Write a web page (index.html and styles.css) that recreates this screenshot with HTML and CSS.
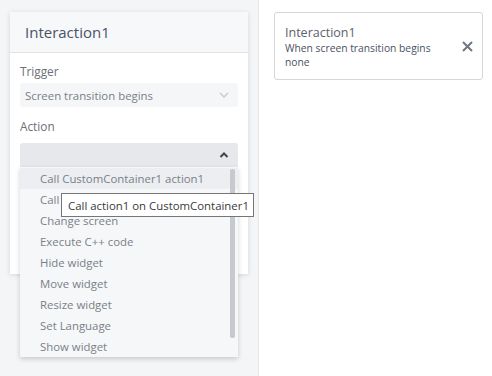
FILE: index.html
```html
<!DOCTYPE html>
<html>
<head>
<meta charset="utf-8">
<link rel="stylesheet" href="styles.css">
</head>
<body>
<div class="left">
  <div class="panel">
    <div class="panel-header">Interaction1</div>
    <div class="panel-body">
      <div class="label">Trigger</div>
      <div class="select">
        <span>Screen transition begins</span>
        <svg class="chev" width="10" height="6" viewBox="0 0 10 6"><path d="M1 1 L5 5 L9 1" fill="none" stroke="#c9ccd0" stroke-width="1.5"/></svg>
      </div>
      <div class="label label-action">Action</div>
      <div class="select select-open">
        <span></span>
        <svg class="chev" width="10" height="6" viewBox="0 0 10 6"><path d="M1.5 5 L5 1.5 L8.5 5" fill="none" stroke="#3e444c" stroke-width="2"/></svg>
        <div class="dropdown">
          <div class="item item-hover">Call CustomContainer1 action1</div>
          <div class="item">Call CustomContainer1 action2</div>
          <div class="item">Change screen</div>
          <div class="item">Execute C++ code</div>
          <div class="item">Hide widget</div>
          <div class="item">Move widget</div>
          <div class="item">Resize widget</div>
          <div class="item">Set Language</div>
          <div class="item">Show widget</div>
          <div class="scrollbar"></div>
        </div>
      </div>
    </div>
  </div>
  <div class="tooltip">Call action1 on CustomContainer1</div>
</div>
<div class="right">
  <div class="card">
    <div class="card-text">
      <div class="card-title">Interaction1</div>
      <div class="card-line">When screen transition begins</div>
      <div class="card-line">none</div>
    </div>
    <svg class="close" width="11" height="11" viewBox="0 0 11 11"><path d="M1 1 L10 10 M10 1 L1 10" stroke="#70767e" stroke-width="2" fill="none"/></svg>
  </div>
</div>
</body>
</html>
```
FILE: styles.css
```css
* { box-sizing: border-box; }
html, body { margin: 0; padding: 0; }
body {
  width: 492px;
  height: 376px;
  display: flex;
  font-family: "Open Sans", "Noto Sans", sans-serif;
  overflow: hidden;
}
.left {
  position: relative;
  width: 259px;
  height: 376px;
  background: #f4f5f7;
  border-right: 1px solid #e4e6e9;
  padding: 12px 10px 0 10px;
}
.panel {
  width: 238px;
  height: 262px;
  background: #ffffff;
  box-shadow: 0 1px 5px rgba(0,0,0,0.13);
}
.panel-header {
  height: 41px;
  background: #f7f8fa;
  border-bottom: 1px solid #e1e3e6;
  padding-left: 15px;
  display: flex;
  align-items: center;
  font-size: 15px;
  color: #4a5364;
}
.panel-body {
  padding: 10px 10px 0 10px;
}
.label {
  font-size: 11.8px;
  line-height: 16px;
  color: #6c7078;
}
.label-action { margin-top: 11px; }
.select {
  position: relative;
  margin-top: 4px;
  height: 24px;
  background: #f5f6f8;
  border-radius: 3px;
  display: flex;
  align-items: center;
  justify-content: space-between;
  padding: 0 9px 0 5px;
  font-size: 11.4px;
  color: #7a7e86;
}
.select-open {
  margin-top: 9px;
  background: #e6e8eb;
  border-radius: 3px 3px 0 0;
}
.dropdown {
  position: absolute;
  left: 0;
  top: 24px;
  width: 218px;
  height: 190px;
  background: #f5f7f9;
  box-shadow: 0 2px 5px rgba(0,0,0,0.18);
  z-index: 5;
  padding-top: 1px;
}
.item {
  height: 21px;
  line-height: 21px;
  padding-left: 20px;
  font-size: 11.4px;
  color: #7a7f87;
  white-space: nowrap;
}
.item-hover { background: #eceef1; }
.scrollbar {
  position: absolute;
  right: 3px;
  top: 2px;
  width: 5px;
  height: 169px;
  background: #c6c9cd;
  border-radius: 2px;
}
.tooltip {
  position: absolute;
  left: 61px;
  top: 193px;
  width: 193px;
  height: 24px;
  background: #ffffff;
  border: 1px solid #767676;
  font-size: 11.4px;
  color: #3a3a3a;
  display: flex;
  align-items: center;
  padding-left: 6px;
  white-space: nowrap;
  z-index: 10;
}
.right {
  flex: 1;
  background: #ffffff;
  padding: 12px 0 0 15px;
}
.card {
  width: 209px;
  height: 68px;
  border: 1px solid #d4d6d9;
  border-radius: 3px;
  display: flex;
  align-items: center;
  justify-content: space-between;
  padding: 0 9px 0 10px;
}
.card-text { margin-top: 1px; }
.card-title {
  font-size: 12.5px;
  line-height: 16px;
  color: #5a616d;
}
.card-line {
  font-size: 10.3px;
  line-height: 14px;
  color: #4a5161;
  font-weight: 500;
}
.close { flex: none; }
```
